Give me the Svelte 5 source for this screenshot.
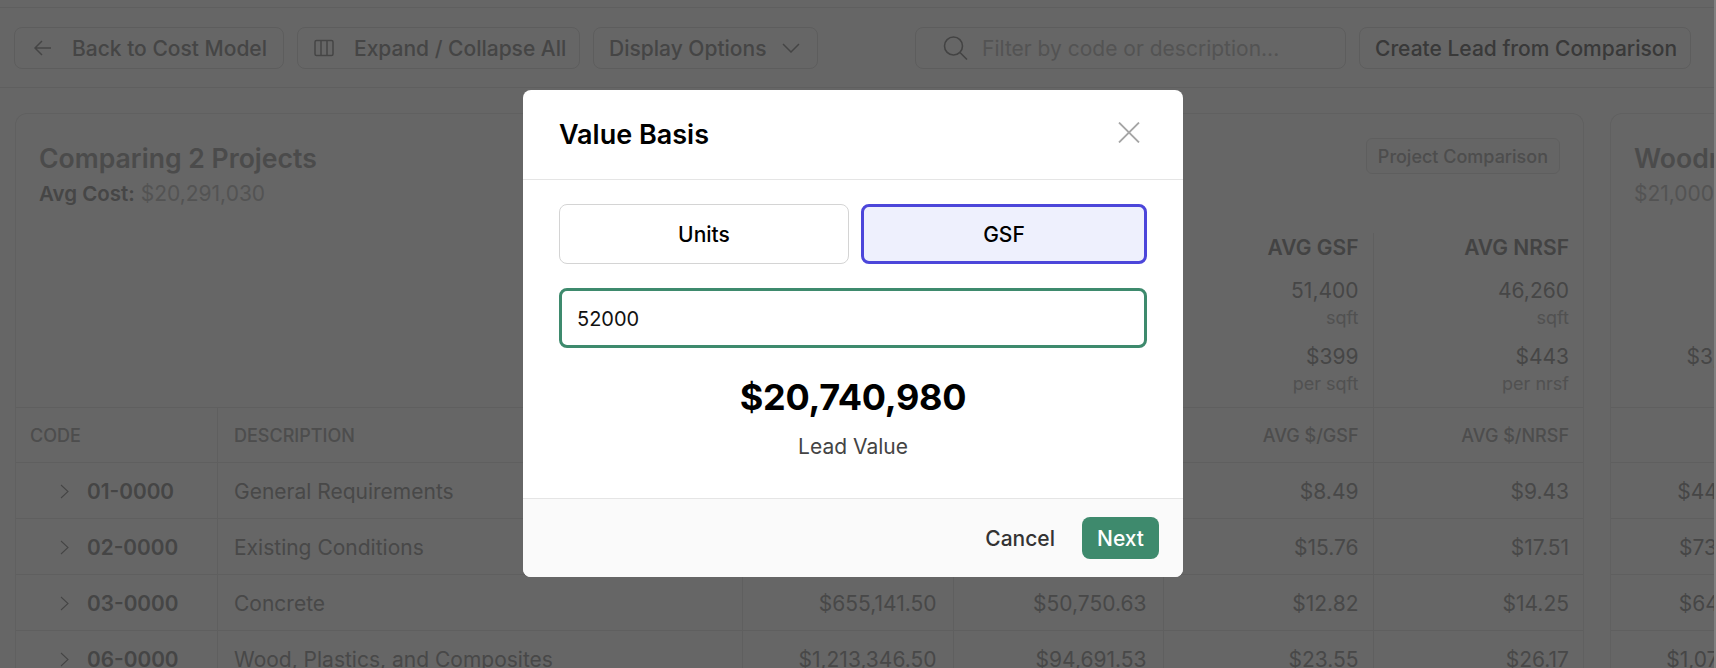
<script>
  const rows = [
    { code: '01-0000', desc: 'General Requirements', a: '', b: '', gsf: '$8.49', nrsf: '$9.43', next: '$443,207.50' },
    { code: '02-0000', desc: 'Existing Conditions', a: '', b: '', gsf: '$15.76', nrsf: '$17.51', next: '$731,482.00' },
    { code: '03-0000', desc: 'Concrete', a: '$655,141.50', b: '$50,750.63', gsf: '$12.82', nrsf: '$14.25', next: '$642,915.25' },
    { code: '06-0000', desc: 'Wood, Plastics, and Composites', a: '$1,213,346.50', b: '$94,691.53', gsf: '$23.55', nrsf: '$26.17', next: '$1,071,338.00' }
  ];
</script>

<div class="page">
  <div class="topnav"></div>
  <div class="toolbar">
    <div class="group">
      <button class="btn back">
        <svg width="20" height="20" viewBox="0 0 20 20" fill="none" stroke="currentColor" stroke-width="1.5"><path d="M18 10H2M9 3 2 10l7 7" /></svg>
        <span>Back to Cost Model</span>
      </button>
      <button class="btn expand">
        <svg width="20" height="18" viewBox="0 0 20 18" fill="none" stroke="currentColor" stroke-width="1.5"><rect x="1" y="1.5" width="18" height="15" rx="1.5" /><path d="M7 1.5v15M13 1.5v15" /></svg>
        <span>Expand / Collapse All</span>
      </button>
      <button class="btn display">
        <span>Display Options</span>
        <svg width="18" height="10" viewBox="0 0 18 10" fill="none" stroke="currentColor" stroke-width="1.5"><path d="M1 1l8 8 8-8" /></svg>
      </button>
    </div>
    <div class="group">
      <div class="search">
        <svg width="25" height="24" viewBox="0 0 25 24" fill="none" stroke="currentColor" stroke-width="1.6"><circle cx="10.5" cy="10" r="9" /><path d="M17 16.5l7 7" /></svg>
        <span>Filter by code or description...</span>
      </div>
      <button class="btn create">Create Lead from Comparison</button>
    </div>
  </div>

  <div class="cards">
    <section class="card main">
      <div class="head">
        <div>
          <h2>Comparing 2 Projects</h2>
          <p><b>Avg Cost:</b> $20,291,030</p>
        </div>
        <span class="badge">Project Comparison</span>
      </div>
      <div class="grid stats">
        <div></div><div></div><div></div><div></div>
        <div class="stat">
          <h3>AVG GSF</h3>
          <strong>51,400</strong><small>sqft</small>
          <strong>$399</strong><small>per sqft</small>
        </div>
        <div class="stat">
          <h3>AVG NRSF</h3>
          <strong>46,260</strong><small>sqft</small>
          <strong>$443</strong><small>per nrsf</small>
        </div>
      </div>
      <div class="grid thead">
        <div>CODE</div>
        <div>DESCRIPTION</div>
        <div></div>
        <div></div>
        <div class="num tight">AVG $/GSF</div>
        <div class="num tight">AVG $/NRSF</div>
      </div>
      {#each rows as r}
        <div class="grid row">
          <div class="code">
            <svg width="9" height="15" viewBox="0 0 9 15" fill="none" stroke="currentColor" stroke-width="1.1"><path d="M1 1l7 6.5L1 14" /></svg>
            <span>{r.code}</span>
          </div>
          <div>{r.desc}</div>
          <div class="num">{r.a}</div>
          <div class="num">{r.b}</div>
          <div class="num tight">{r.gsf}</div>
          <div class="num tight">{r.nrsf}</div>
        </div>
      {/each}
    </section>

    <section class="card second">
      <div class="head">
        <div>
          <h2>Woodridge Commons</h2>
          <p>$21,000,000</p>
        </div>
      </div>
      <div class="stats2"><strong>$3,480,000</strong></div>
      <div class="thead2"></div>
      {#each rows as r}
        <div class="row2">{r.next}</div>
      {/each}
    </section>
  </div>

  <div class="overlay">
    <div class="scrollbar"></div>
    <div class="modal">
      <header>
        <h1>Value Basis</h1>
        <button class="close" aria-label="Close">
          <svg width="22" height="21" viewBox="0 0 22 21" fill="none" stroke="currentColor" stroke-width="1.8"><path d="M1 .5l20 20M21 .5l-20 20" /></svg>
        </button>
      </header>
      <div class="body">
        <div class="choices">
          <button class="choice units">Units</button>
          <button class="choice gsf">GSF</button>
        </div>
        <div class="input">52000</div>
        <div class="value">$20,740,980</div>
        <div class="label">Lead Value</div>
      </div>
      <footer>
        <button class="cancel">Cancel</button>
        <button class="next">Next</button>
      </footer>
    </div>
  </div>
</div>

<style>
  :global(body) {
    margin: 0;
    background: #fff;
  }
  .page {
    position: relative;
    width: 1716px;
    height: 668px;
    overflow: hidden;
    background: #fff;
    font-family: Inter, "Liberation Sans", sans-serif;
    font-size: 21px;
    color: #b0b0b0;
  }
  button {
    font: inherit;
    background: none;
    border: 0;
    padding: 0;
    color: inherit;
  }
  .topnav {
    height: 7px;
    border-bottom: 1px solid #eee;
  }
  .toolbar {
    height: 79px;
    border-bottom: 1px solid #eee;
    display: flex;
    align-items: center;
    justify-content: space-between;
    padding: 0 25px 0 14px;
  }
  .group {
    display: flex;
    gap: 13px;
    align-items: center;
  }
  .btn {
    height: 42px;
    box-sizing: border-box;
    border: 1px solid #e8e8e8;
    border-radius: 8px;
    display: flex;
    align-items: center;
    font-weight: 500;
    color: #acacac;
    white-space: nowrap;
    padding-top: 1px;
  }
  .back {
    width: 270px;
    padding-left: 18px;
    gap: 19px;
  }
  .expand {
    width: 283px;
    padding-left: 16px;
    gap: 20px;
  }
  .display {
    width: 225px;
    padding-left: 15px;
    gap: 16px;
  }
  .create {
    width: 332px;
    padding-left: 15px;
    color: #8e8e8e;
  }
  .search {
    width: 431px;
    height: 42px;
    box-sizing: border-box;
    border: 1px solid #e8e8e8;
    border-radius: 8px;
    display: flex;
    align-items: center;
    padding: 1px 0 0 27px;
    gap: 14px;
    color: #cfcfcf;
  }
  .search svg {
    color: #a8a8a8;
  }
  .cards {
    display: flex;
    gap: 26px;
    padding: 25px 0 0 15px;
  }
  .card {
    flex: none;
    box-sizing: border-box;
    border: 1px solid #efefef;
    border-bottom: 0;
    border-radius: 12px 12px 0 0;
  }
  .main {
    width: 1569px;
  }
  .second {
    width: 400px;
  }
  .head {
    height: 119px;
    padding: 0 23px;
    display: flex;
    justify-content: space-between;
    box-sizing: border-box;
  }
  h2 {
    margin: 27px 0 0;
    font-size: 26.6px;
    line-height: 34px;
    font-weight: 600;
    color: #bcbcbc;
    white-space: nowrap;
  }
  .head p {
    margin: 4px 0 0;
    line-height: 30px;
    color: #d0d0d0;
    white-space: nowrap;
  }
  .head p b {
    font-size: 20.5px;
    font-weight: 600;
    color: #b0b0b0;
  }
  .badge {
    margin-top: 24px;
    height: 36px;
    box-sizing: border-box;
    border: 1px solid #ececec;
    border-radius: 6px;
    padding: 0 11px;
    display: flex;
    align-items: center;
    font-size: 18px;
    font-weight: 500;
    color: #c0c0c0;
    background: #fdfdfd;
  }
  .grid {
    display: grid;
    grid-template-columns: 202px 525px 210.5px 210px 210px 1fr;
  }
  .grid > div {
    border-right: 1px solid #eee;
    box-sizing: border-box;
    min-width: 0;
  }
  .grid > div:last-child {
    border-right: 0;
  }
  .stats {
    height: 175px;
    box-sizing: border-box;
    border-bottom: 1px solid #eee;
  }
  .stats > div:nth-child(-n+2) {
    border-right: 0;
  }
  .stat {
    padding-right: 14px;
    padding-top: 1px;
    display: flex;
    flex-direction: column;
    align-items: flex-end;
  }
  .stat h3 {
    margin: 0 0 15px;
    font-size: 21px;
    line-height: 28px;
    font-weight: 600;
    color: #a8a8a8;
  }
  .stat strong,
  .stats2 strong {
    font-weight: 400;
    line-height: 28px;
    color: #b0b0b0;
  }
  .stat small {
    font-size: 18px;
    line-height: 26px;
    color: #cacaca;
    margin-bottom: 12px;
  }
  .thead {
    height: 55px;
    box-sizing: border-box;
    border-bottom: 1px solid #eee;
    font-size: 18px;
    font-weight: 500;
    color: #c0c0c0;
  }
  .thead > div,
  .row > div {
    display: flex;
    align-items: center;
    padding: 0 16px;
    white-space: nowrap;
  }
  .thead > div:first-child {
    padding-left: 14px;
  }
  .row {
    height: 56px;
    box-sizing: border-box;
    border-bottom: 1px solid #eee;
    color: #b4b4b4;
  }
  .row > div {
    padding-top: 2px;
  }
  .thead > .num,
  .row > .num {
    justify-content: flex-end;
  }
  .thead > .tight,
  .row > .tight {
    padding-right: 14px;
  }
  .row > .code {
    padding-left: 44px;
    gap: 18px;
    font-size: 20.8px;
    font-weight: 600;
    color: #acacac;
  }
  .stats2 {
    height: 175px;
    box-sizing: border-box;
    padding: 110px 206px 0 0;
    white-space: nowrap;
    display: flex;
    justify-content: flex-end;
    border-bottom: 1px solid #eee;
  }
  .thead2 {
    height: 55px;
    box-sizing: border-box;
    border-bottom: 1px solid #eee;
  }
  .row2 {
    height: 56px;
    box-sizing: border-box;
    padding: 2px 206px 0 0;
    display: flex;
    align-items: center;
    justify-content: flex-end;
    white-space: nowrap;
    border-bottom: 1px solid #eee;
    color: #b0b0b0;
  }
  .overlay {
    position: absolute;
    inset: 0;
    box-sizing: border-box;
    padding: 0 10px 1px 0;
    background: rgba(0, 0, 0, 0.6);
    display: flex;
    align-items: center;
    justify-content: center;
  }
  .scrollbar {
    position: absolute;
    top: 0;
    right: 0;
    bottom: 0;
    width: 2px;
    background: #808080;
  }
  .modal {
    width: 660px;
    height: 487px;
    background: #fff;
    border-radius: 8px;
    overflow: hidden;
    display: flex;
    flex-direction: column;
    color: #000;
  }
  header {
    height: 90px;
    flex: none;
    box-sizing: border-box;
    border-bottom: 1px solid #e5e5e5;
    display: flex;
    align-items: center;
    justify-content: space-between;
    padding: 0 43px 0 36px;
  }
  h1 {
    margin: 0;
    font-size: 27px;
    font-weight: 600;
  }
  .close {
    display: flex;
    color: #a6a6a6;
    margin-bottom: 5px;
  }
  .body {
    flex: 1;
    padding: 24px 36px 0;
    display: flex;
    flex-direction: column;
    align-items: center;
  }
  .choices {
    width: 100%;
    display: flex;
    gap: 12px;
  }
  .choice {
    height: 60px;
    box-sizing: border-box;
    font-weight: 500;
    color: #000;
    border-radius: 8px;
  }
  .units {
    flex: 292 0 0;
    border: 1px solid #d4d4d4;
  }
  .gsf {
    flex: 284 0 0;
    border: 3px solid #4c46da;
    background: #eef0fd;
  }
  .input {
    width: 100%;
    margin-top: 24px;
    height: 60px;
    box-sizing: border-box;
    border: 3px solid #3e8a6d;
    border-radius: 8px;
    display: flex;
    align-items: center;
    padding: 2px 0 0 15px;
    font-size: 20px;
    color: #111;
  }
  .value {
    margin-top: 26px;
    font-size: 36px;
    letter-spacing: -0.3px;
    line-height: 46px;
    font-weight: 700;
  }
  .label {
    margin-top: 13px;
    line-height: 28px;
    color: #444;
  }
  footer {
    height: 79px;
    flex: none;
    box-sizing: border-box;
    border-top: 1px solid #e5e5e5;
    background: #fafafa;
    display: flex;
    align-items: center;
    justify-content: flex-end;
    gap: 27px;
    padding: 0 24px 0 0;
  }
  .cancel {
    font-weight: 500;
    color: #333;
  }
  .next {
    width: 77px;
    height: 42px;
    border-radius: 8px;
    background: #3e8a6d;
    color: #fff;
    font-weight: 500;
  }
</style>
